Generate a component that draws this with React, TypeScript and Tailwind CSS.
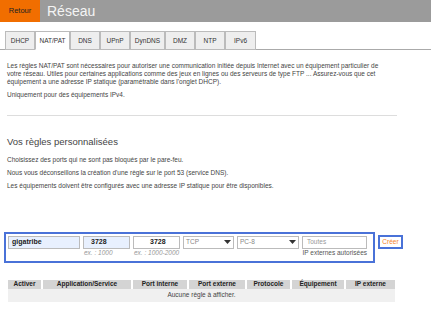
import React from 'react';

const tabs = [
  { label: 'DHCP', w: 'w-[30px]' },
  { label: 'NAT/PAT', w: 'w-[35px]', active: true },
  { label: 'DNS', w: 'w-[30px]' },
  { label: 'UPnP', w: 'w-[30px]' },
  { label: 'DynDNS', w: 'w-[35px]' },
  { label: 'DMZ', w: 'w-[30px]' },
  { label: 'NTP', w: 'w-[30px]' },
  { label: 'IPv6', w: 'w-[31px]' }
];

const columns = [
  { label: 'Activer', w: 'w-[33px]' },
  { label: 'Application/Service', w: 'w-[88px]' },
  { label: 'Port interne', w: 'w-[54px]' },
  { label: 'Port externe', w: 'w-[56px]' },
  { label: 'Protocole', w: 'w-[43px]' },
  { label: 'Équipement', w: 'w-[52px]' },
  { label: 'IP externe', w: 'w-[49px]' }
];

const Caret = () => (
  <svg width="7" height="4" viewBox="0 0 7 4" className="shrink-0">
    <path d="M0 0h7L3.5 4z" fill="#333" />
  </svg>
);

const App: React.FC = () => {
  return (
    <div className="w-[431px] h-[315px] bg-white overflow-hidden text-[#333]" style={{ fontFamily: '"Liberation Sans", Arial, sans-serif' }}>
      {/* header */}
      <div className="flex h-[22px]">
        <div className="w-[40px] bg-[#f16e00] flex items-center justify-center text-[7.5px] text-[#222]">Retour</div>
        <div className="flex-1 bg-[#9b9b9b] flex items-center pl-[7px] text-[14px] text-[#f4f4f4] leading-none">Réseau</div>
      </div>

      {/* tabs */}
      <div className="mt-[9px] pl-[5px] flex border-b border-[#aaa]">
        {tabs.map(t => (
          <div
            key={t.label}
            className={`${t.w} h-[19px] -mb-px flex items-center justify-center text-[6.5px] border border-[#bbb] ${
              t.active ? 'bg-white border-b-white' : 'bg-[#eee]'
            }`}
          >
            {t.label}
          </div>
        ))}
      </div>

      <div className="px-[7px]">
        <div className="mt-[12px] text-[6.5px] leading-[8px] text-[#444] whitespace-nowrap">
          <p>Les règles NAT/PAT sont nécessaires pour autoriser une communication initiée depuis Internet avec un équipement particulier de</p>
          <p>votre réseau. Utiles pour certaines applications comme des jeux en lignes ou des serveurs de type FTP ... Assurez-vous que cet</p>
          <p>équipement a une adresse IP statique (paramétrable dans l'onglet DHCP).</p>
          <p className="mt-[5px]">Uniquement pour des équipements IPv4.</p>
        </div>

        <div className="mt-[16px] w-[390px] border-t border-[#ddd]" />

        <h2 className="mt-[21px] text-[9.5px] leading-none text-[#444]">Vos règles personnalisées</h2>
        <div className="mt-[9px] text-[6.5px] text-[#444] space-y-[5px] leading-[8px]">
          <p>Choisissez des ports qui ne sont pas bloqués par le pare-feu.</p>
          <p>Nous vous déconseillons la création d'une règle sur le port 53 (service DNS).</p>
          <p>Les équipements doivent être configurés avec une adresse IP statique pour être disponibles.</p>
        </div>
      </div>

      {/* form */}
      <div className="mt-[42px] pl-[4px] flex items-start gap-[3px]">
        <div className="w-[371px] h-[31px] border-2 border-[#4a72d8] flex items-start gap-[3px] pl-[2px] pt-[2px]">
          <div className="w-[72px] h-[13px] border border-[#bbb] bg-[#e8f0fe] flex items-center pl-[3px] text-[7px] font-bold text-[#222]">gigatribe</div>
          <div className="flex flex-col">
            <div className="w-[47px] h-[13px] border border-[#bbb] bg-[#e8f0fe] flex items-center pl-[7px] text-[7px] font-bold text-[#222]">3728</div>
            <span className="text-[6.5px] italic text-[#999] leading-[8px] pl-[1px]">ex. : 1000</span>
          </div>
          <div className="flex flex-col">
            <div className="w-[47px] h-[13px] border border-[#bbb] bg-white flex items-center pl-[16px] text-[7px] font-bold text-[#222]">3728</div>
            <span className="text-[6.5px] italic text-[#999] leading-[8px] pl-[1px]">ex. : 1000-2000</span>
          </div>
          <div className="w-[51px] h-[13px] border border-[#bbb] bg-white flex items-center justify-between px-[2px] text-[6.5px] text-[#888]">
            TCP
            <Caret />
          </div>
          <div className="w-[62px] h-[13px] border border-[#bbb] bg-white flex items-center justify-between px-[2px] text-[6.5px] text-[#888]">
            PC-8
            <Caret />
          </div>
          <div className="flex flex-col items-end">
            <div className="w-[65px] h-[13px] border border-[#bbb] bg-white flex items-center pl-[4px] text-[6.5px] text-[#999]">Toutes</div>
            <span className="text-[6.5px] text-[#555] leading-[8px]">IP externes autorisées</span>
          </div>
        </div>
        <button className="mt-[3px] w-[25px] h-[14px] border-2 border-[#4a72d8] bg-white text-[6.5px] text-[#f5822a] flex items-center justify-center">Créer</button>
      </div>

      {/* table */}
      <div className="mt-[17px] ml-[8px] w-[387px] text-[6.5px]">
        <div className="flex gap-[2px] h-[9px]">
          {columns.map(c => (
            <div key={c.label} className={`${c.w} shrink-0 bg-[#d4d4d4] font-bold text-[#222] flex items-center justify-center whitespace-nowrap`}>{c.label}</div>
          ))}
        </div>
        <div className="h-[13px] bg-[#f0f0f0] text-[#444] flex items-center justify-center">Aucune règle à afficher.</div>
      </div>
    </div>
  );
};

export default App;
